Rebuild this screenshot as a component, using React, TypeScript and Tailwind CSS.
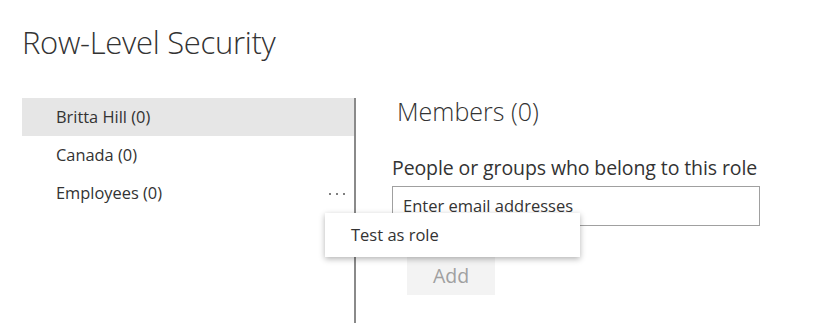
import React from 'react';

const font = { fontFamily: '"Open Sans", "Noto Sans", sans-serif' };

const roles = [
  { name: 'Britta Hill', count: 0, selected: true },
  { name: 'Canada', count: 0 },
  { name: 'Employees', count: 0, menu: true },
];

export default function App() {
  return (
    <div className="relative w-[825px] h-[323px] overflow-hidden bg-white text-[#333]" style={font}>
      <h1 className="pl-[22px] pt-[22px] text-[31px] font-light leading-[40px] tracking-[-0.3px]">Row-Level Security</h1>

      <div className="mt-[36px] flex">
        {/* Role list */}
        <div className="ml-[22px] w-[334px] h-[240px] border-r-2 border-[#8a8a8a]">
          {roles.map((r) => (
            <div
              key={r.name}
              className={`flex items-center justify-between h-[38px] pl-[34px] pr-[9px] text-[16.4px] ${r.selected ? 'bg-[#e6e6e6]' : ''}`}
            >
              <span>{r.name} ({r.count})</span>
              {r.menu && (
                <span className="flex gap-[5px] mt-[1px]">
                  <span className="w-[2px] h-[2px] rounded-full bg-[#555]" />
                  <span className="w-[2px] h-[2px] rounded-full bg-[#555]" />
                  <span className="w-[2px] h-[2px] rounded-full bg-[#555]" />
                </span>
              )}
            </div>
          ))}
        </div>

        {/* Members panel */}
        <div className="pl-[36px] pt-[1px]">
          <h2 className="pl-[5px] text-[25px] font-light leading-[24px]">Members (0)</h2>
          <p className="mt-[33px] text-[19.5px] leading-[24px] tracking-[-0.1px]">People or groups who belong to this role</p>
          <div className="mt-[6px] w-[368px] h-[40px] border border-[#a0a0a0] pl-[10px] pt-[9px] text-[16.5px] leading-[20px]">
            Enter email addresses
          </div>
          <button className="mt-[31px] ml-[15px] w-[88px] h-[38px] bg-[#f3f3f3] text-[19.5px] text-[#a0a0a0]">Add</button>
        </div>
      </div>

      {/* Context menu */}
      <div className="absolute left-[325px] top-[213px] w-[255px] h-[44px] bg-white shadow-[0_2px_6px_rgba(0,0,0,0.3)] flex items-center pl-[26px] text-[16.5px]">
        Test as role
      </div>
    </div>
  );
}
